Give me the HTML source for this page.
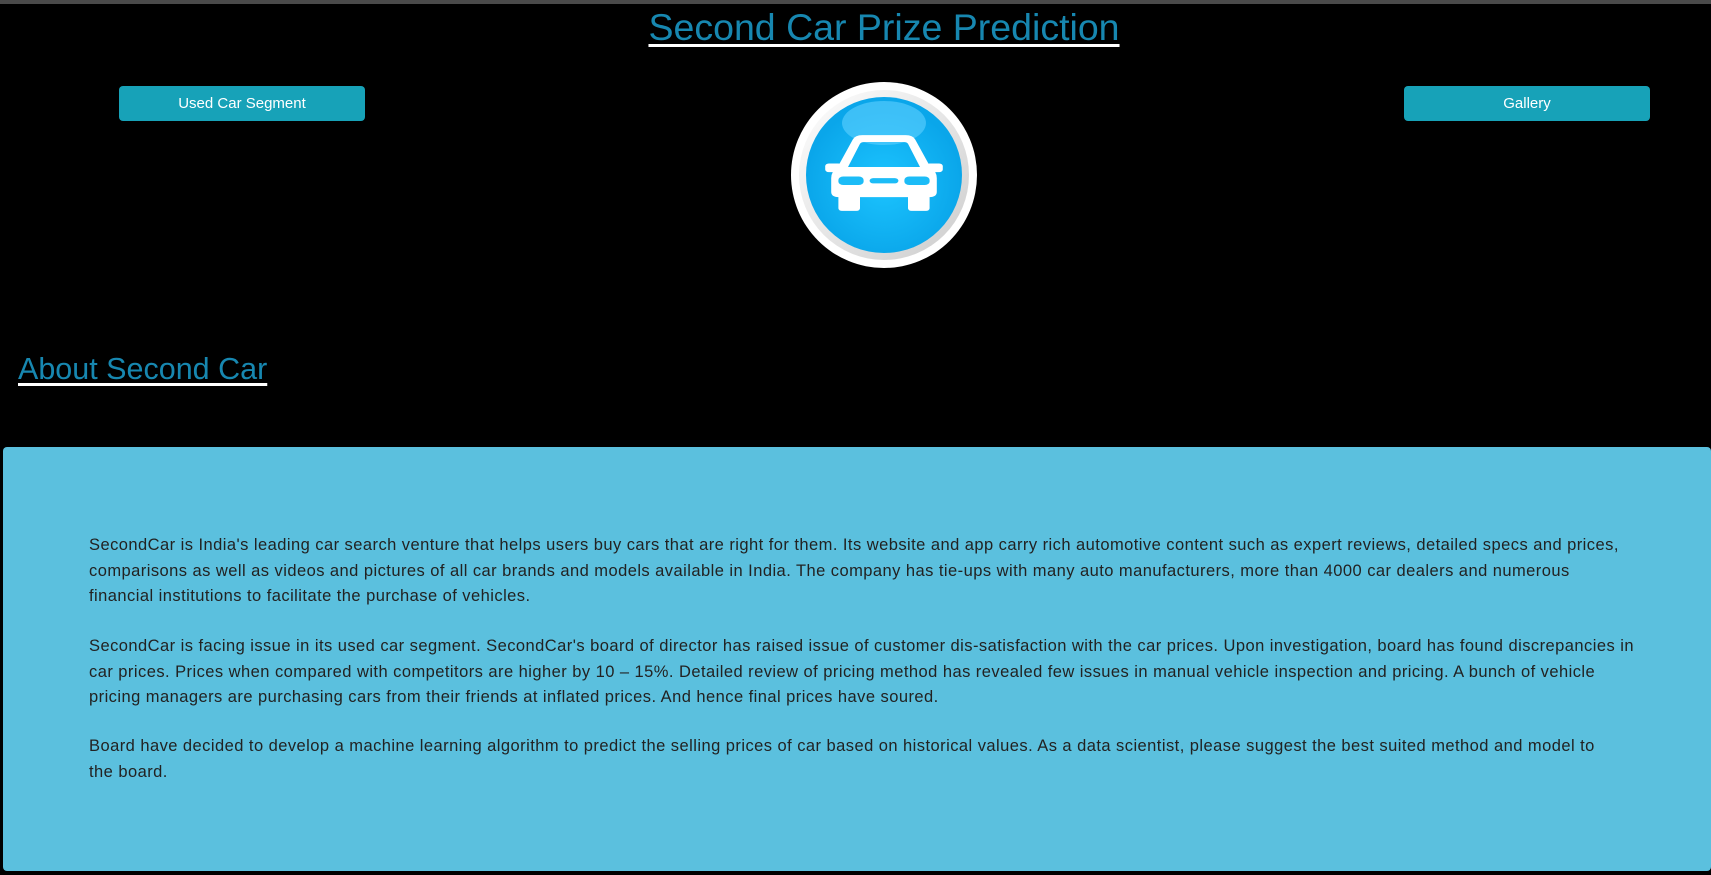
<!DOCTYPE html>
<html><head><meta charset="utf-8"><style>
*{margin:0;padding:0;box-sizing:border-box}
body{width:1711px;height:875px;background:#000;font-family:"Liberation Sans",sans-serif;position:relative;overflow:hidden}
.bar{position:absolute;left:0;top:0;width:1711px;height:4px;background:#4a4a4a}
h1{position:absolute;left:0;width:1768px;top:6px;text-align:center;font-weight:normal;font-size:37.5px;color:#1787b0;text-decoration:underline;text-decoration-color:#fff;text-underline-offset:4px}
.btn{position:absolute;top:86px;height:35px;width:246px;background:#17a2b8;color:#fff;border-radius:4px;font-size:15px;text-align:center;line-height:35px}
h2{position:absolute;left:18px;top:352px;font-weight:normal;font-size:30.5px;color:#1787b0;text-decoration:underline;text-decoration-color:#fff;text-underline-offset:4px}
.box{position:absolute;left:3px;top:447px;width:1708px;height:424px;background:#5bc0de;border-radius:4px}
.box p{position:absolute;left:86px;font-size:16.5px;letter-spacing:0.45px;line-height:25.5px;color:#222;white-space:nowrap}
</style></head><body>
<div class="bar"></div>
<h1>Second Car Prize Prediction</h1>
<div class="btn" style="left:119px">Used Car Segment</div>
<div class="btn" style="left:1404px">Gallery</div>
<svg style="position:absolute;left:790px;top:81px" width="188" height="188" viewBox="0 0 188 188">
<defs><radialGradient id="g" cx="50%" cy="55%" r="50%"><stop offset="0" stop-color="#1cc4ff"/><stop offset="1" stop-color="#0aa6ea"/></radialGradient>
<linearGradient id="w" x1="0" y1="0" x2="1" y2="1"><stop offset="0" stop-color="#fff"/><stop offset="1" stop-color="#ccc"/></linearGradient></defs>
<circle cx="94" cy="94" r="93" fill="#fff"/>
<circle cx="94" cy="94" r="85" fill="url(#w)"/>
<circle cx="94" cy="94" r="78" fill="url(#g)"/>
<ellipse cx="94" cy="42" rx="42" ry="22" fill="#5fd0ff" opacity=".6"/>
<g transform="translate(94 92) scale(1.2 0.86) translate(-94 -106)">
<g fill="#fff">
<path d="M55 100 L68 67 Q70 62 76 62 L112 62 Q118 62 120 67 L133 100 Q138 104 138 112 L138 128 Q138 134 132 134 L56 134 Q50 134 50 128 L50 112 Q50 104 55 100 Z M64 99 L124 99 L114 72 Q113 70 110 70 L78 70 Q75 70 74 72 Z" fill-rule="evenodd"/>
<rect x="56" y="130" width="18" height="20" rx="3"/><rect x="114" y="130" width="18" height="20" rx="3"/>
<rect x="45" y="95" width="14" height="10" rx="3"/><rect x="129" y="95" width="14" height="10" rx="3"/>
</g>
<g fill="#1cbcf7"><rect x="56" y="110" width="21" height="10" rx="4"/><rect x="111" y="110" width="21" height="10" rx="4"/><rect x="82" y="112" width="24" height="6" rx="3"/></g>
</g>
</svg>
<h2>About Second Car</h2>
<div class="box">
<p style="top:86px">SecondCar is India's leading car search venture that helps users buy cars that are right for them. Its website and app carry rich automotive content such as expert reviews, detailed specs and prices,<br>comparisons as well as videos and pictures of all car brands and models available in India. The company has tie-ups with many auto manufacturers, more than 4000 car dealers and numerous<br>financial institutions to facilitate the purchase of vehicles.</p>
<p style="top:187px">SecondCar is facing issue in its used car segment. SecondCar's board of director has raised issue of customer dis-satisfaction with the car prices. Upon investigation, board has found discrepancies in<br>car prices. Prices when compared with competitors are higher by 10 – 15%. Detailed review of pricing method has revealed few issues in manual vehicle inspection and pricing. A bunch of vehicle<br>pricing managers are purchasing cars from their friends at inflated prices. And hence final prices have soured.</p>
<p style="top:287px">Board have decided to develop a machine learning algorithm to predict the selling prices of car based on historical values. As a data scientist, please suggest the best suited method and model to<br>the board.</p>
</div>
</body></html>
